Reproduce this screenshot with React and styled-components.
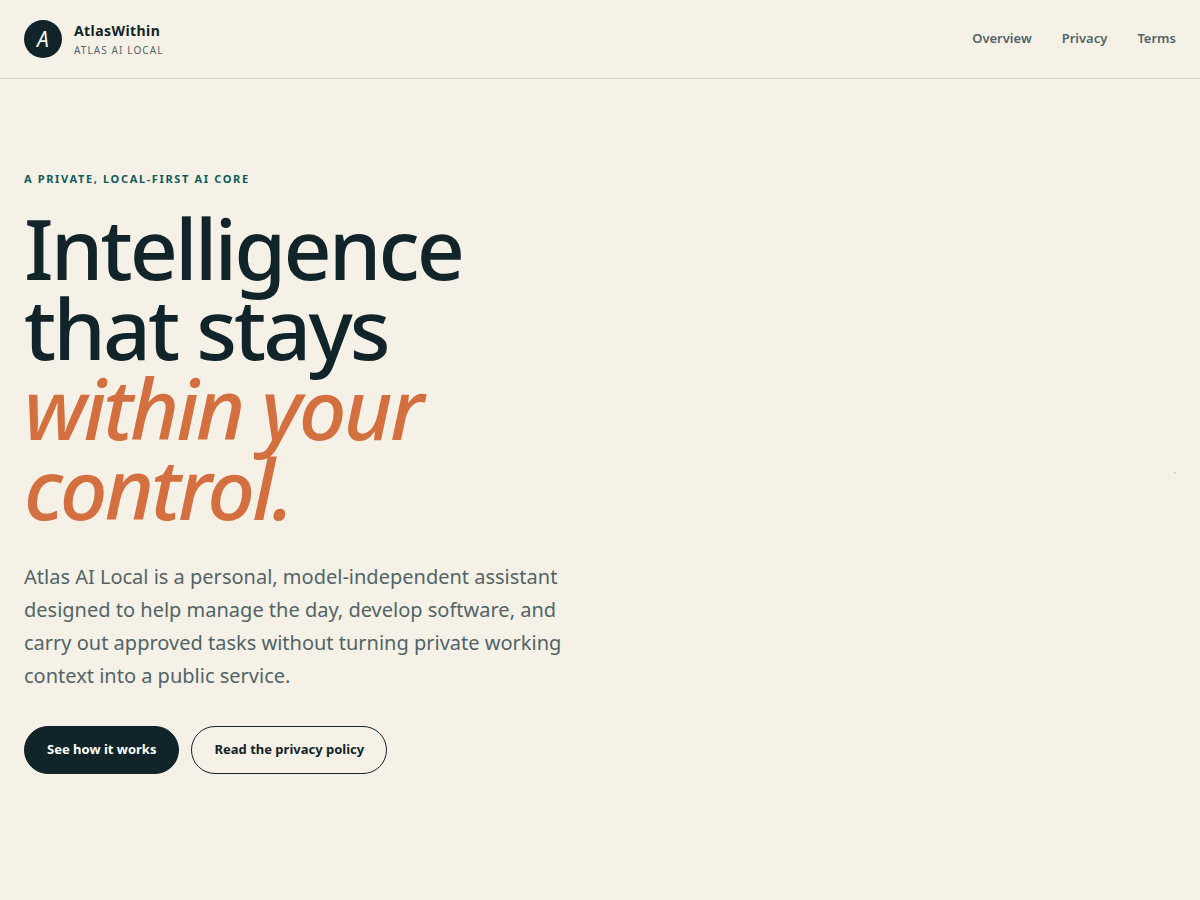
import React from 'react';
import styled, { createGlobalStyle, css } from 'styled-components';

const GlobalStyle = createGlobalStyle`
  *,
  *::before,
  *::after {
    box-sizing: border-box;
  }
  body {
    margin: 0;
    background: #f6f1e6;
    color: #10242a;
    font-family: 'Noto Sans', sans-serif;
    line-height: 1.65;
  }
  a {
    color: inherit;
    text-decoration: none;
  }
`;

const Header = styled.header`
  display: flex;
  align-items: center;
  justify-content: space-between;
  padding: 20px 24px;
  border-bottom: 1px solid #d8d5ca;
`;

const Brand = styled.a`
  display: flex;
  align-items: center;
  gap: 12px;
`;

const BrandMark = styled.span`
  display: flex;
  align-items: center;
  justify-content: center;
  width: 38px;
  height: 38px;
  border-radius: 50%;
  background: #10242a;
  color: #f6f1e6;
  font-size: 21px;
  font-style: italic;
`;

const BrandText = styled.span`
  display: flex;
  flex-direction: column;
  gap: 1px;

  strong {
    font-size: 14px;
    line-height: 20px;
    letter-spacing: 0.03em;
  }
  small {
    color: #516468;
    font-size: 10px;
    line-height: 16px;
    letter-spacing: 0.11em;
    text-transform: uppercase;
  }
`;

const Nav = styled.nav`
  display: flex;
  gap: 30px;
  color: #516468;
  font-size: 13px;
  font-weight: 600;
`;

const Hero = styled.main`
  display: grid;
  grid-template-columns: 1fr 1fr;
  align-items: center;
  gap: 24px;
  padding: 92px 24px;
`;

const Eyebrow = styled.p`
  margin: 0 0 21px;
  color: #0c5c5c;
  font-size: 11px;
  font-weight: 700;
  line-height: 16px;
  letter-spacing: 0.15em;
  text-transform: uppercase;
`;

const Title = styled.h1`
  margin: 0;
  max-width: 560px;
  font-size: 84px;
  font-weight: 500;
  line-height: 80px;
  letter-spacing: -0.035em;

  em {
    display: block;
    color: #d46f3f;
  }
`;

const Lead = styled.p`
  margin: 32px 0 34px;
  color: #516468;
  font-size: 20px;
`;

const Actions = styled.div`
  display: flex;
  flex-wrap: wrap;
  gap: 12px;
`;

const ButtonLink = styled.a`
  display: inline-flex;
  align-items: center;
  min-height: 48px;
  padding: 0 22px;
  border: 1px solid #10242a;
  border-radius: 24px;
  font-size: 13px;
  font-weight: 700;
  ${props =>
    props.$primary &&
    css`
      background: #10242a;
      color: #ffffff;
    `}
`;

const Dot = styled.span`
  justify-self: end;
  width: 2px;
  height: 2px;
  background: #d8d5ca;
`;

const links = ['Overview', 'Privacy', 'Terms'];

function App() {
  return (
    <>
      <GlobalStyle />
      <Header>
        <Brand href="#home">
          <BrandMark aria-hidden="true">A</BrandMark>
          <BrandText>
            <strong>AtlasWithin</strong>
            <small>Atlas AI Local</small>
          </BrandText>
        </Brand>
        <Nav>
          {links.map(link => (
            <a key={link} href={`#${link.toLowerCase()}`}>
              {link}
            </a>
          ))}
        </Nav>
      </Header>
      <Hero>
        <div>
          <Eyebrow>A private, local-first AI core</Eyebrow>
          <Title>
            Intelligence that stays <em>within your control.</em>
          </Title>
          <Lead>
            Atlas AI Local is a personal, model-independent assistant designed
            to help manage the day, develop software, and carry out approved
            tasks without turning private working context into a public
            service.
          </Lead>
          <Actions>
            <ButtonLink href="#overview" $primary>
              See how it works
            </ButtonLink>
            <ButtonLink href="#privacy">Read the privacy policy</ButtonLink>
          </Actions>
        </div>
        <Dot aria-hidden="true" />
      </Hero>
    </>
  );
}

export default App;
